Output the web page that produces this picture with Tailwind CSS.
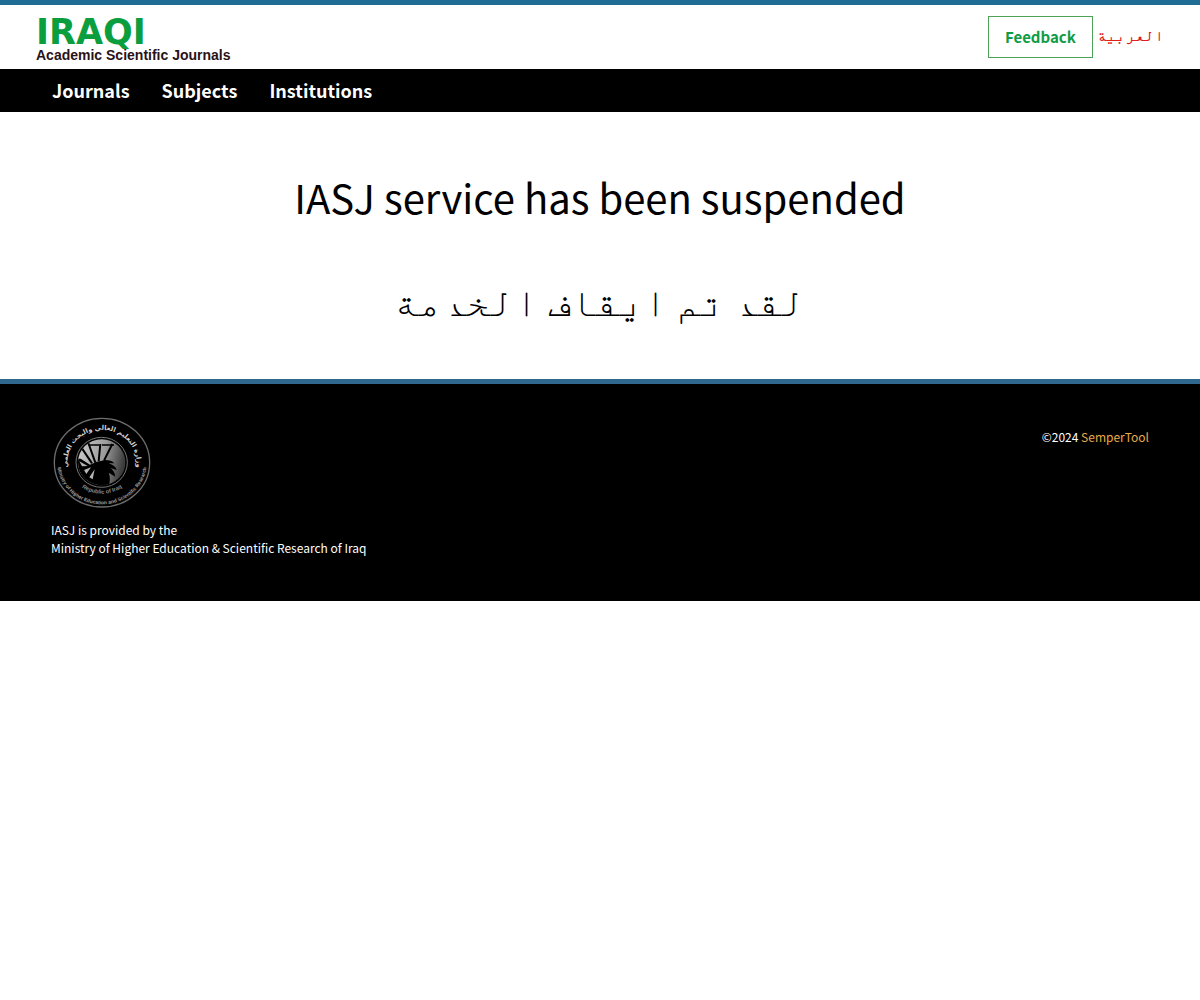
<!DOCTYPE html>
<html lang="en">
<head>
  <meta charset="UTF-8" />
  <meta name="viewport" content="width=device-width, initial-scale=1.0"/>
  <title>IASJ | Iraqi Academic Scientific Journals</title>
  <script src="https://cdn.jsdelivr.net/npm/@tailwindcss/browser@4"></script>
</head>
<body class="bg-white text-black font-['Noto_Sans_CJK_SC','FreeMono',sans-serif]">

  <!-- Header -->
  <header class="border-t-5 border-[#1f6d94]">
    <div class="flex justify-between items-center h-16 px-9">
      <a href="#" class="block pt-2 whitespace-nowrap">
        <span class="block font-['DejaVu_Sans'] font-bold text-[35px] leading-[28px] text-[#0b9e3e]">IRAQI</span>
        <span class="block font-['Liberation_Sans'] font-bold text-[14px] leading-[18px] text-[#2a1216]">Academic Scientific Journals</span>
      </a>
      <div class="flex items-center gap-1">
        <button type="button" class="border border-[#4fa356] px-4 py-2 text-[15px] leading-6 font-bold text-[#109c46]">Feedback</button>
        <a href="#" lang="ar" dir="rtl" class="pb-[6px] text-[16px] leading-6 font-bold text-[#e01f1f]">العربية</a>
      </div>
    </div>
    <nav class="bg-black px-[52px] text-white">
      <ul class="flex gap-8 text-[18px] leading-[43px] font-bold">
        <li><a href="#">Journals</a></li>
        <li><a href="#">Subjects</a></li>
        <li><a href="#">Institutions</a></li>
      </ul>
    </nav>
  </header>

  <!-- Main -->
  <main class="px-4 pt-[53px] pb-12 text-center text-[40px] leading-16">
    <h1>IASJ service has been suspended</h1>
    <p lang="ar" dir="rtl" class="mt-[38px]">لقد تم ايقاف الخدمة</p>
  </main>

  <!-- Footer -->
  <footer class="border-t-5 border-[#2f678f] bg-black px-[51px] pt-8 pb-11 text-[12px] leading-[18px] text-white">
    <div class="flex justify-between items-start">
      <div>
        <!-- Ministry seal -->
        <svg class="block w-[100px] h-[94px]" viewBox="33 18 300 282" fill="none" role="img" aria-label="Ministry of Higher Education and Scientific Research">
          <defs>
            <linearGradient id="globe" x1="0" y1="0" x2="1" y2="0.2">
              <stop offset="0" stop-color="#d0d0d0"/>
              <stop offset="0.6" stop-color="#9a9a9a"/>
              <stop offset="1" stop-color="#3c3c3c"/>
            </linearGradient>
            <clipPath id="disc"><ellipse cx="185" cy="157" rx="71" ry="69"/></clipPath>
            <path id="topArc" d="M84 178 A104 99 0 1 1 288 178"/>
            <path id="bottomArc" d="M52 158 A134 125 0 0 0 320 158"/>
            <path id="innerArc" d="M86 158 A100 93 0 0 0 286 158"/>
          </defs>
          <ellipse cx="186" cy="158" rx="143" ry="133" stroke="#6d6d6d" stroke-width="4"/>
          <ellipse cx="185" cy="157" rx="77" ry="75" stroke="#777777" stroke-width="3"/>
          <g clip-path="url(#disc)">
            <rect x="110" y="84" width="150" height="146" fill="url(#globe)"/>
            <!-- open hand -->
            <path fill="#000" d="M108 146 L122 146 L150 164 L168 156 L196 150 Q214 150 223 160 L206 160 Q226 166 230 180 L212 174 Q224 184 226 200 L206 188 Q212 202 208 222 L202 234 L108 234 Z"/>
            <path stroke="#000" stroke-width="6" d="M120 106 L156 160 M144 96 L166 158 M181 102 L176 154 M217 102 L192 152"/>
            <path stroke="#000" stroke-width="4" d="M146 105 H178 M186 105 H222"/>
            <path fill="#b5b5b5" d="M118 154 L143 168 L126 169 Z M132 180 L153 172 L139 192 Z M148 202 L164 178 L158 208 Z"/>
          </g>
          <g fill="#a0a0a0" font-family="Liberation Sans, sans-serif" font-weight="bold" text-anchor="middle">
            <text font-size="15"><textPath href="#bottomArc" startOffset="50%">Ministry of Higher Education and Scientific Research</textPath></text>
            <text font-size="17" fill="#8c8c8c"><textPath href="#innerArc" startOffset="50%">Republic of Iraq</textPath></text>
            <text font-size="20" fill="#d0d0d0" font-family="DejaVu Sans, sans-serif"><textPath href="#topArc" startOffset="50%">وزارة التعليم العالي والبحث العلمي</textPath></text>
          </g>
        </svg>
        <p class="mt-[11px]">IASJ is provided by the<br/>Ministry of Higher Education &amp; Scientific Research of Iraq</p>
      </div>
      <p class="mt-3">©2024 <a href="#" class="text-[#e8ab4a]">SemperTool</a></p>
    </div>
  </footer>
</body>
</html>
